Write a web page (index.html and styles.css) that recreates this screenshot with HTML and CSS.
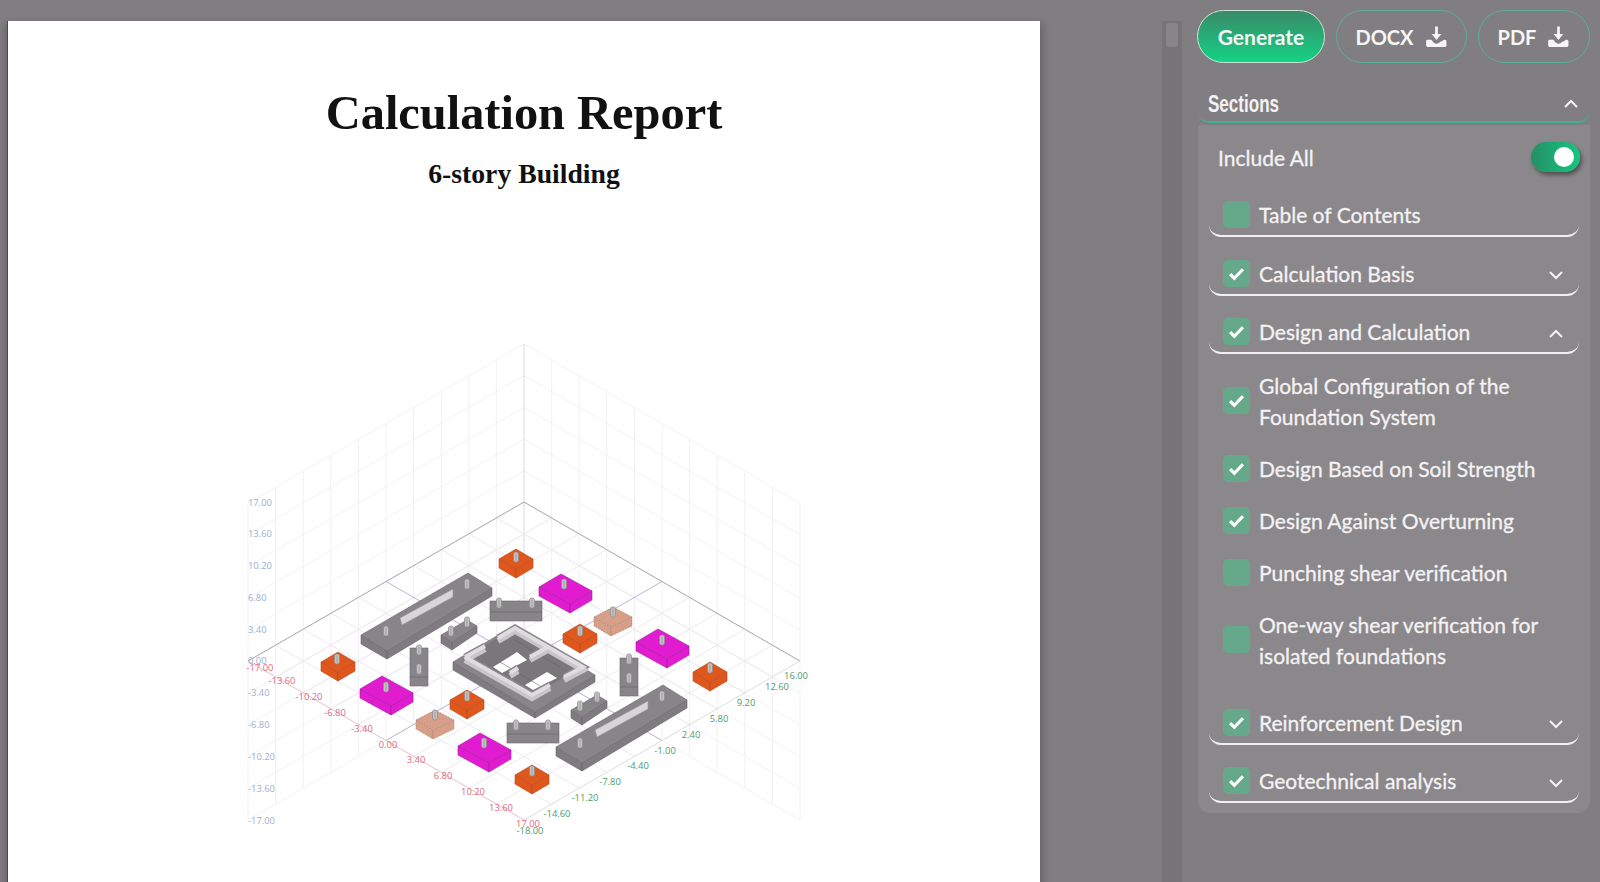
FILE: index.html
```html
<!DOCTYPE html>
<html lang="en">

<head>
    <meta charset="UTF-8">
    <meta name="viewport" content="width=device-width, initial-scale=1.0">
    <title>Calculation Report</title>
    <link rel="stylesheet" href="styles.css">
</head>

<body>
    <svg class="defs" width="0" height="0">
        <symbol id="check" viewBox="0 0 16 16"><path d="M2 8.500l4 4 8-8.500" /></symbol>
        <symbol id="chev-down" viewBox="0 0 16 16"><path d="M2 5l6 6 6-6" /></symbol>
        <symbol id="chev-up" viewBox="0 0 16 16"><path d="M2 11l6-6 6 6" /></symbol>
        <symbol id="download" viewBox="0 0 24 24">
            <path class="arrow" d="M10.600 1.500h2.800v8h3.600L12 15.600 7 9.500h3.600z" />
            <path class="arrow" d="M2 15.500h4.600l2.600 2.900c1.500 1.500 4.100 1.500 5.600 0l1.200-1.200h1.500c.9-1 2.100-1.700 3.200-1.700.9 0 1.700.8 1.700 1.700v3.800c0 1.100-.9 2-2 2H3.200c-1.100 0-2-.9-2-2v-4.500z" />
        </symbol>
    </svg>

    <div class="paper">
        <h1>Calculation Report</h1>
        <h2>6-story Building</h2>

        <svg class="chart" viewBox="224 330 600 520" width="600" height="520">
            <defs>
                <path id="wall-grid" d="M248 503V820M275.600 487.100V804.100M303.200 471.200V788.200M330.800 455.300V772.300M358.400 439.400V756.400M386 423.500V740.500M413.600 407.600V724.600M441.200 391.700V708.700M468.800 375.800V692.800M496.400 359.900V676.900M248 503L524 344M248 534.700L524 375.700M248 566.400L524 407.400M248 598.100L524 439.100M248 629.800L524 470.800M248 661.500L524 502.500M248 693.200L524 534.200M248 724.900L524 565.900M248 756.600L524 597.600M248 788.300L524 629.300M248 820L524 661" />
                <path id="floor-grid" d="M275.600 676.900L551.600 517.900M303.200 692.800L579.200 533.800M330.800 708.700L606.800 549.700M358.400 724.600L634.400 565.600M413.600 756.400L689.600 597.400M441.200 772.300L717.200 613.300M468.800 788.200L744.800 629.200M496.400 804.100L772.400 645.100" />
                <path id="core-walls" d="M465 657L485 646M498 638L515 628L583 667L564 677M530 657L548 647M465 657L532 695L550 685M510 673L518 668" />
                <g id="peg">
                    <rect class="peg" x="-2.500" y="-5" width="5" height="10" rx="2" />
                    <path class="peg-line" d="M0-3.500V4" />
                </g>
                <g id="orange">
                    <polygon class="orange" points="-17,0 0,10 0,19 -17,9" />
                    <polygon class="orange" points="17,0 0,10 0,19 17,9" />
                    <polygon class="orange" points="-17,0 0,-10 17,0 0,10" />
                </g>
                <g id="magenta">
                    <polygon class="magenta" points="-26,-2 5,15 5,24 -26,7" />
                    <polygon class="magenta" points="27,2 5,15 5,24 27,11" />
                    <polygon class="magenta" points="-26,-2 -4,-15 27,2 5,15" />
                </g>
                <g id="tan">
                    <polygon class="tan" points="-19,0 -2,10 -2,19 -19,9" />
                    <polygon class="tan" points="19,0 -2,10 -2,19 19,9" />
                    <polygon class="tan" points="-19,0 0,-10 19,0 -2,10" />
                </g>
                <g id="beam">
                    <polygon class="grey" points="0,0 26,16 26,24 0,9" />
                    <polygon class="grey" points="26,16 131,-47 131,-39 26,24" />
                    <polygon class="grey-top" points="0,0 107,-62 131,-47 26,16" />
                    <polygon class="wall" points="39,-17 92,-46 92,-38 41,-10" />
                </g>
                <g id="short-beam">
                    <polygon class="grey" points="0,0 11,7 11,15 0,8" />
                    <polygon class="grey" points="11,7 36,-9 36,-2 11,15" />
                    <polygon class="grey-top" points="0,0 26,-15 36,-9 11,7" />
                </g>
                <g id="front-block">
                    <rect class="grey-top" width="52" height="20" />
                    <path class="grey-line" d="M0 11H52" />
                </g>
                <g id="side-block">
                    <rect class="grey-top" width="18" height="38" />
                    <path class="grey-line" d="M0 29H18" />
                </g>
            </defs>

            <use class="wall-line" href="#wall-grid" />
            <use class="wall-line" href="#wall-grid" transform="matrix(-1 0 0 1 1048 0)" />
            <path class="mid-wall" d="M524 344V661" />
            <use class="floor-line" href="#floor-grid" />
            <use class="floor-line" href="#floor-grid" transform="matrix(-1 0 0 1 1048 0)" />
            <path class="floor-mid" d="M386 581.500L662 740.500M662 581.500L386 740.500" />
            <path class="floor-edge" d="M248 661L524 502L800 661" />
            <path class="axis-red" d="M248 661L524 820" />
            <path class="axis-green" d="M524 820L800 661" />

            <g class="labels blue">
                <text x="248" y="506">17.00</text>
                <text x="248" y="537">13.60</text>
                <text x="248" y="569">10.20</text>
                <text x="248" y="601">6.80</text>
                <text x="248" y="633">3.40</text>
                <text x="248" y="664">0.00</text>
                <text x="248" y="696">-3.40</text>
                <text x="248" y="728">-6.80</text>
                <text x="248" y="760">-10.20</text>
                <text x="248" y="792">-13.60</text>
                <text x="248" y="824">-17.00</text>
            </g>
            <g class="labels red">
                <text x="260" y="671">-17.00</text>
                <text x="282" y="684">-13.60</text>
                <text x="309" y="700">-10.20</text>
                <text x="335" y="716">-6.80</text>
                <text x="362" y="732">-3.40</text>
                <text x="388" y="748">0.00</text>
                <text x="416" y="763">3.40</text>
                <text x="443" y="779">6.80</text>
                <text x="473" y="795">10.20</text>
                <text x="501" y="811">13.60</text>
                <text x="528" y="827">17.00</text>
            </g>
            <g class="labels green">
                <text x="530" y="834">-18.00</text>
                <text x="557" y="817">-14.60</text>
                <text x="585" y="801">-11.20</text>
                <text x="610" y="785">-7.80</text>
                <text x="638" y="769">-4.40</text>
                <text x="665" y="754">-1.00</text>
                <text x="691" y="738">2.40</text>
                <text x="719" y="722">5.80</text>
                <text x="746" y="706">9.20</text>
                <text x="777" y="690">12.60</text>
                <text x="796" y="679">16.00</text>
            </g>

            <!-- foundation plan -->
            <use href="#beam" x="361" y="635" />
            <use href="#peg" x="386" y="631" />
            <use href="#peg" x="467" y="584" />
            <use href="#beam" x="556" y="747" />
            <use href="#peg" x="580" y="743" />
            <use href="#peg" x="662" y="696" />

            <use href="#front-block" x="490" y="601" />
            <use href="#peg" x="499" y="603" />
            <use href="#peg" x="532" y="603" />
            <use href="#front-block" x="507" y="723" />
            <use href="#peg" x="516" y="725" />
            <use href="#peg" x="548" y="725" />
            <use href="#side-block" x="410" y="648" />
            <use href="#peg" x="419" y="650" />
            <use href="#peg" x="419" y="669" />
            <use href="#side-block" x="620" y="658" />
            <use href="#peg" x="629" y="659" />
            <use href="#peg" x="629" y="678" />
            <use href="#short-beam" x="441" y="635" />
            <use href="#peg" x="451" y="631" />
            <use href="#peg" x="467" y="622" />
            <use href="#short-beam" x="571" y="710" />
            <use href="#peg" x="580" y="706" />
            <use href="#peg" x="597" y="697" />

            <g>
                <polygon class="grey" points="453,662 535,712 535,718 453,670" />
                <polygon class="grey" points="595,675 535,712 535,718 595,682" />
                <polygon class="grey-top" points="453,662 515,625 595,675 535,712" />
                <polygon class="core-floor" points="465,657 515,628 583,667 532,695" />
                <polygon class="core-hole" points="493,667 517,652 527,660 502,673" />
                <polygon class="core-hole" points="525,685 547,672 557,678 533,690" />
                <path class="grey-line" d="M515 640L560 667M500 662L540 686" />
                <use class="core-edge" href="#core-walls" />
                <use class="core-face" href="#core-walls" />
                <use class="core-wall" href="#core-walls" />
            </g>

            <use href="#orange" x="338" y="662" />
            <use href="#peg" x="337" y="659" />
            <use href="#orange" x="516" y="559" />
            <use href="#peg" x="516" y="557" />
            <use href="#orange" x="580" y="634" />
            <use href="#peg" x="580" y="631" />
            <use href="#orange" x="710" y="672" />
            <use href="#peg" x="710" y="668" />
            <use href="#orange" x="467" y="700" />
            <use href="#peg" x="467" y="696" />
            <use href="#orange" x="532" y="775" />
            <use href="#peg" x="532" y="771" />

            <use href="#magenta" x="386" y="691" />
            <use href="#peg" x="386" y="687" />
            <use href="#magenta" x="565" y="589" />
            <use href="#peg" x="564" y="584" />
            <use href="#magenta" x="662" y="644" />
            <use href="#peg" x="662" y="640" />
            <use href="#magenta" x="484" y="748" />
            <use href="#peg" x="484" y="743" />

            <use href="#tan" x="613" y="617" />
            <use href="#peg" x="613" y="612" />
            <use href="#tan" x="435" y="720" />
            <use href="#peg" x="435" y="715" />
        </svg>
    </div>

    <div class="scroll-track">
        <div class="scroll-thumb"></div>
    </div>

    <aside class="sidebar">
        <div class="actions">
            <button class="btn generate">Generate</button>
            <button class="btn docx">DOCX <svg class="dl"><use href="#download" /></svg></button>
            <button class="btn pdf">PDF <svg class="dl"><use href="#download" /></svg></button>
        </div>

        <div class="sections-head">
            <span class="sections-title">Sections</span>
            <svg class="chev"><use href="#chev-up" /></svg>
        </div>

        <div class="sections">
            <div class="include">
                <span class="label">Include All</span>
                <div class="toggle"><div class="knob"></div></div>
            </div>

            <div class="row">
                <div class="cb"></div>
                <span class="label">Table of Contents</span>
            </div>
            <div class="row">
                <div class="cb"><svg class="tick"><use href="#check" /></svg></div>
                <span class="label">Calculation Basis</span>
                <svg class="chev"><use href="#chev-down" /></svg>
            </div>
            <div class="row">
                <div class="cb"><svg class="tick"><use href="#check" /></svg></div>
                <span class="label">Design and Calculation</span>
                <svg class="chev"><use href="#chev-up" /></svg>
            </div>

            <div class="sub-list">
                <div class="sub">
                    <div class="cb"><svg class="tick"><use href="#check" /></svg></div>
                    <span class="label">Global Configuration of the<br>Foundation System</span>
                </div>
                <div class="sub">
                    <div class="cb"><svg class="tick"><use href="#check" /></svg></div>
                    <span class="label">Design Based on Soil Strength</span>
                </div>
                <div class="sub">
                    <div class="cb"><svg class="tick"><use href="#check" /></svg></div>
                    <span class="label">Design Against Overturning</span>
                </div>
                <div class="sub">
                    <div class="cb"></div>
                    <span class="label">Punching shear verification</span>
                </div>
                <div class="sub">
                    <div class="cb"></div>
                    <span class="label">One-way shear verification for<br>isolated foundations</span>
                </div>
            </div>

            <div class="row">
                <div class="cb"><svg class="tick"><use href="#check" /></svg></div>
                <span class="label">Reinforcement Design</span>
                <svg class="chev"><use href="#chev-down" /></svg>
            </div>
            <div class="row">
                <div class="cb"><svg class="tick"><use href="#check" /></svg></div>
                <span class="label">Geotechnical analysis</span>
                <svg class="chev"><use href="#chev-down" /></svg>
            </div>
        </div>
    </aside>
</body>

</html>
```

FILE: styles.css
```css
body {
    margin: 0;
    height: 882px;
    overflow: hidden;
    display: flex;
    align-items: flex-start;
    background-color: #807e80;
    font-family: Lato, "Open Sans", sans-serif;
    color: #f4f2f4;
}

.defs {
    position: absolute;
}

/* report page */
.paper {
    flex: none;
    width: 1032px;
    height: 862px;
    margin: 21px 0 0 8px;
    background-color: #fff;
    box-shadow: -1px 0 0 #4a484a, 0 5px 8px 3px rgba(0, 0, 0, 0.2);
    overflow: hidden;
    text-align: center;
    color: #111;
    font-family: "Liberation Serif", serif;
}

.paper h1 {
    margin: 62px 0 0;
    font-size: 48.4px;
    line-height: 60px;
}

.paper h2 {
    margin: 13px 0 0;
    font-size: 27.7px;
    line-height: 36px;
}

.chart {
    display: block;
    margin: 138px 0 0 216px;
}

.wall-line {
    fill: none;
    stroke: #f3f0f4;
    stroke-width: 1;
}

.mid-wall {
    stroke: #e3dfe5;
    stroke-width: 1.2;
}

.floor-line {
    fill: none;
    stroke: #ede9ee;
    stroke-width: 1;
}

.floor-mid {
    stroke: #a99fd0;
    stroke-width: 0.8;
}

.floor-edge {
    fill: none;
    stroke: #aca6b2;
    stroke-width: 1;
}

.axis-red {
    stroke: #e8bfc8;
}

.axis-green {
    stroke: #d8dedb;
}

.labels {
    font-family: "Open Sans", sans-serif;
    font-size: 9.4px;
}

.blue {
    fill: #9ab0cf;
}

.red {
    fill: #dd6b80;
    text-anchor: middle;
}

.green {
    fill: #4f9c6c;
    text-anchor: middle;
}

.peg {
    fill: #c4c3c4;
    stroke: #8d8b8d;
    stroke-width: 0.7;
}

.peg-line {
    stroke: #8d8b8d;
    stroke-width: 0.6;
}

.orange {
    fill: #e0571d;
    stroke: #b34a1c;
    stroke-width: 0.6;
}

.magenta {
    fill: #e01bd0;
    stroke: #a51f9c;
    stroke-width: 0.6;
}

.tan {
    fill: #d79f88;
    stroke: #a88270;
    stroke-width: 0.6;
    stroke-dasharray: 2 1;
}

.grey {
    fill: #7f7b80;
    stroke: #686569;
    stroke-width: 0.6;
}

.grey-top {
    fill: #888589;
    stroke: #6d6a6e;
    stroke-width: 0.6;
}

.grey-line {
    stroke: #656266;
    stroke-width: 0.6;
}

.wall {
    fill: #d8d5d8;
    stroke: #9a979a;
    stroke-width: 0.6;
}

.core-floor {
    fill: #7a777b;
}

.core-hole {
    fill: #fff;
}

.core-edge,
.core-face,
.core-wall {
    fill: none;
}

.core-edge {
    stroke: #8a878b;
    stroke-width: 7;
}

.core-face {
    stroke: #c9c6c9;
    stroke-width: 6;
    transform: translateY(3px);
}

.core-wall {
    stroke: #dfdcdf;
    stroke-width: 4;
}

/* scrollbar */
.scroll-track {
    flex: none;
    width: 20px;
    height: 861px;
    margin: 21px 0 0 122px;
    background-color: #767476;
}

.scroll-thumb {
    width: 12px;
    height: 24px;
    margin: 2px 0 0 4px;
    border-radius: 3px;
    background-color: #878587;
}

/* side panel */
.sidebar {
    flex: none;
    width: 393px;
    margin: 10px 0 0 15px;
}

.actions {
    display: flex;
    gap: 11px;
}

.btn {
    display: flex;
    justify-content: center;
    align-items: center;
    gap: 11px;
    height: 53px;
    padding: 0;
    border: 1px solid #5cb092;
    border-radius: 27px;
    background: none;
    color: #f7f6f7;
    font-family: Lato, sans-serif;
    font-size: 20px;
    font-weight: 700;
}

.generate {
    width: 128px;
    border-color: #c8e8d8;
    background: linear-gradient(#3a8a68, #14d284);
    font-size: 21px;
}

.docx {
    width: 131px;
}

.pdf {
    width: 112px;
}

.dl {
    width: 23px;
    height: 23px;
}

.arrow {
    fill: #f7f6f7;
}

.sections-head {
    display: flex;
    justify-content: space-between;
    align-items: center;
    height: 34px;
    margin: 22px 1px 0 2px;
    padding: 2px 10px 0 9px;
    border-bottom: 2px solid #3fb488;
    border-radius: 0 0 10px 10px;
}

.sections-title {
    font-family: "Liberation Sans", sans-serif;
    font-size: 24px;
    font-weight: 700;
    transform: scaleX(0.71);
    transform-origin: left center;
}

.chev {
    width: 16px;
    height: 16px;
    fill: none;
    stroke: #f4f2f4;
    stroke-width: 2;
}

.sections {
    margin: 2px 0 0 1px;
    padding: 17px 11px 10px;
    border-radius: 0 0 12px 12px;
    background-color: #8a888a;
    font-size: 21px;
}

.include {
    display: flex;
    justify-content: space-between;
    align-items: center;
    height: 30px;
    padding-left: 9px;
    margin-right: -1px;
    margin-bottom: 22px;
}

.toggle {
    display: flex;
    justify-content: flex-end;
    align-items: center;
    width: 49px;
    height: 30px;
    padding-right: 6px;
    box-sizing: border-box;
    border-radius: 15px;
    background: linear-gradient(90deg, #268f66, #14c680);
    box-shadow: 2px 3px 4px rgba(40, 30, 30, 0.55);
}

.knob {
    width: 20px;
    height: 20px;
    border-radius: 50%;
    background-color: #fff;
}

.row {
    display: flex;
    align-items: center;
    height: 41px;
    margin-bottom: 15.5px;
    padding: 0 15px 0 14px;
    border-bottom: 2px solid #f1eff1;
    border-radius: 0 0 12px 12px;
}

.row:last-child {
    margin-bottom: 0;
}

.row .chev {
    margin-left: auto;
    margin-top: 4px;
}

.cb {
    flex: none;
    display: flex;
    justify-content: center;
    align-items: center;
    width: 27px;
    height: 27px;
    margin-right: 9px;
    border-radius: 5px;
    background-color: #66a98a;
}

.tick {
    width: 17px;
    height: 17px;
    fill: none;
    stroke: #fff;
    stroke-width: 3;
}

.label {
    line-height: 31px;
    -webkit-text-stroke: 0.3px #f4f2f4;
}

.sub-list {
    display: flex;
    flex-direction: column;
    gap: 21px;
    padding: 0 0 31px;
}

.sub {
    display: flex;
    align-items: center;
    padding-left: 14px;
}
```
